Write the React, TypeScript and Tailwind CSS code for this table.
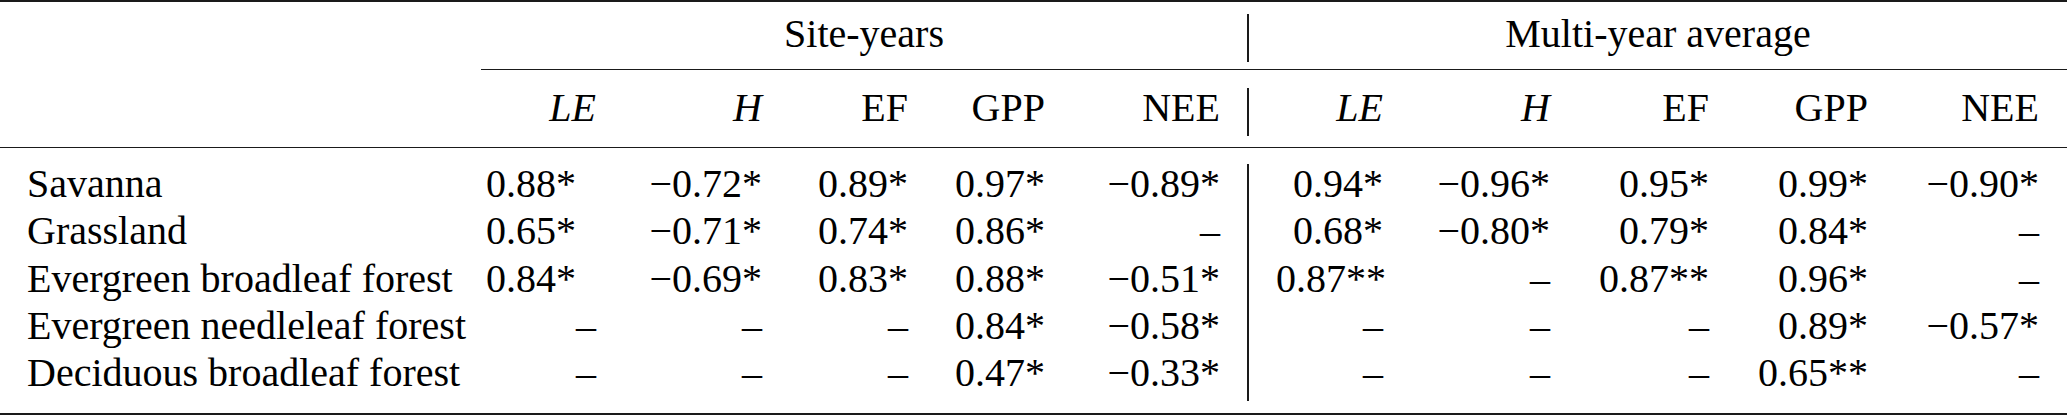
import React from "react";

const GRID =
  "grid grid-cols-[481px_115px_166px_146px_137px_175px_56px_107px_167px_159px_159px_171px_28px]";

const rows: string[][] = [
  ["Savanna", "0.88*", "−0.72*", "0.89*", "0.97*", "−0.89*", "0.94*", "−0.96*", "0.95*", "0.99*", "−0.90*"],
  ["Grassland", "0.65*", "−0.71*", "0.74*", "0.86*", "–", "0.68*", "−0.80*", "0.79*", "0.84*", "–"],
  ["Evergreen broadleaf forest", "0.84*", "−0.69*", "0.83*", "0.88*", "−0.51*", "0.87**", "–", "0.87**", "0.96*", "–"],
  ["Evergreen needleleaf forest", "–", "–", "–", "0.84*", "−0.58*", "–", "–", "–", "0.89*", "−0.57*"],
  ["Deciduous broadleaf forest", "–", "–", "–", "0.47*", "−0.33*", "–", "–", "–", "0.65**", "–"],
];

function Bar() {
  return (
    <div className="flex justify-center">
      <div className="w-[2px] h-full bg-[#1a1a1a]" />
    </div>
  );
}

function Row({ cells }: { cells: string[] }) {
  const left = cells.slice(1, 6);
  const right = cells.slice(6, 11);
  return (
    <div className={`${GRID} h-[47.4px] leading-[39.4px]`}>
      <div className="pl-[27px] whitespace-nowrap">{cells[0]}</div>
      {left.map((v, i) => (
        <div
          key={"l" + i}
          className={`text-right whitespace-nowrap ${i === 0 && v !== "–" ? "pr-[20px]" : ""}`}
        >
          {v}
        </div>
      ))}
      <Bar />
      {right.map((v, i) => (
        <div key={"r" + i} className="text-right whitespace-nowrap">
          {v}
        </div>
      ))}
      <div />
    </div>
  );
}

export default function App() {
  return (
    <div
      className="w-[2067px] h-[417px] bg-white text-black text-[40px] overflow-hidden"
      style={{ fontFamily: '"Liberation Serif", "Times New Roman", serif' }}
    >
      <div className="h-[2px] bg-[#1a1a1a]" />
      {/* header row 1 */}
      <div className="mt-[12.3px] flex h-[47.4px] leading-[39.4px]">
        <div className="w-[481px]" />
        <div className="w-[766px] text-center">Site-years</div>
        <div className="w-[2px] h-full bg-[#1a1a1a]" />
        <div className="flex-1 text-center">Multi-year average</div>
      </div>
      <div className="mt-[7.3px] ml-[481px] h-[1px] bg-[#1a1a1a]" />
      {/* header row 2 */}
      <div className={`${GRID} mt-[18.5px] h-[47.4px] leading-[39.4px]`}>
        <div />
        <div className="text-right italic">LE</div>
        <div className="text-right italic">H</div>
        <div className="text-right">EF</div>
        <div className="text-right">GPP</div>
        <div className="text-right">NEE</div>
        <Bar />
        <div className="text-right italic">LE</div>
        <div className="text-right italic">H</div>
        <div className="text-right">EF</div>
        <div className="text-right">GPP</div>
        <div className="text-right">NEE</div>
        <div />
      </div>
      <div className="mt-[11.1px] h-[1.5px] bg-[#1a1a1a]" />
      {/* body */}
      <div className="mt-[15.3px]">
        {rows.map((r, i) => (
          <Row key={i} cells={r} />
        ))}
      </div>
      <div className="mt-[12.2px] h-[2px] bg-[#1a1a1a]" />
    </div>
  );
}
